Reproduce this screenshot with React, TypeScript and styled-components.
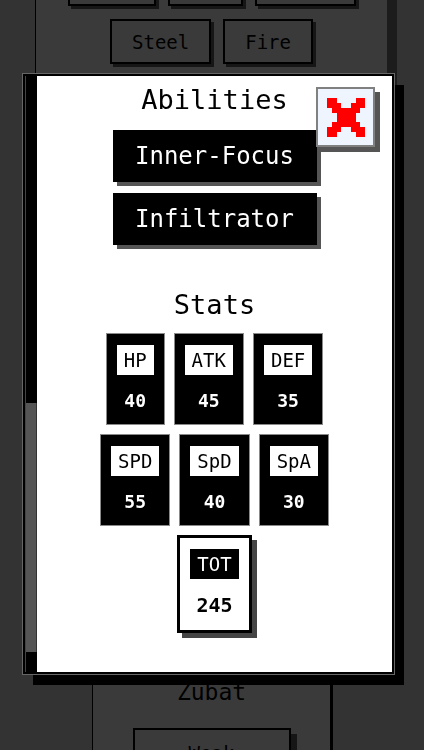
import styled, {createGlobalStyle} from 'styled-components';

const GlobalStyle = createGlobalStyle`
  html, body {
    margin: 0;
    padding: 0;
  }
  body {
    background: #cccccc;
    font-family: 'DejaVu Sans Mono', 'Liberation Mono', monospace;
    overflow: hidden;
  }
`;

type Stat = {label: string; value: number};

const stats: Stat[][] = [
  [
    {label: 'HP', value: 40},
    {label: 'ATK', value: 45},
    {label: 'DEF', value: 35},
  ],
  [
    {label: 'SPD', value: 55},
    {label: 'SpD', value: 40},
    {label: 'SpA', value: 30},
  ],
];

const abilities = ['Inner-Focus', 'Infiltrator'];

// buttons of the row scrolled above the viewport: only their bottom edges show
const hiddenTypeWidths = [88, 75, 101];

function CloseIcon() {
  const rows = ['XX....XX', 'XXX..XXX', '.XXXXXX.', '..XXXX..', '..XXXX..', '.XXXXXX.', 'XXX..XXX', 'XX....XX'];
  return (
    <svg width="38" height="39" viewBox="0 0 8 8" shapeRendering="crispEdges" preserveAspectRatio="none">
      {rows.flatMap((row, y) =>
        row.split('').map((c, x) => (c === 'X' ? <rect key={`${x}-${y}`} x={x} y={y} width="1" height="1" fill="#ff0000" /> : null)),
      )}
    </svg>
  );
}

export default function App() {
  const total = stats.flat().reduce((sum, s) => sum + s.value, 0);

  return (
    <>
      <GlobalStyle />
      <Page>
        <TypeCard>
          <TypeRow>
            {hiddenTypeWidths.map((w) => (
              <TypeButton key={w} style={{width: w}} aria-hidden />
            ))}
          </TypeRow>
          <TypeRow>
            <TypeButton>Steel</TypeButton>
            <TypeButton>Fire</TypeButton>
          </TypeRow>
        </TypeCard>
        <PokemonCard>
          <PokemonName>Zubat</PokemonName>
          <CardButton>Weak</CardButton>
        </PokemonCard>
      </Page>

      <Overlay />
      <Modal role="dialog">
        <ScrollTrack>
          <ScrollThumb />
        </ScrollTrack>
        <ModalBody>
          <Heading>Abilities</Heading>
          <AbilityList>
            {abilities.map((a) => (
              <AbilityButton key={a}>{a}</AbilityButton>
            ))}
          </AbilityList>

          <StatsHeading>Stats</StatsHeading>
          <StatGrid>
            {stats.map((row, i) => (
              <StatRow key={i}>
                {row.map((s) => (
                  <StatBox key={s.label}>
                    <StatLabel>{s.label}</StatLabel>
                    <StatValue>{s.value}</StatValue>
                  </StatBox>
                ))}
              </StatRow>
            ))}
            <StatRow>
              <StatBox $total>
                <StatLabel $total>TOT</StatLabel>
                <StatValue $total>{total}</StatValue>
              </StatBox>
            </StatRow>
          </StatGrid>
        </ModalBody>
        <CloseButton aria-label="Close">
          <CloseIcon />
        </CloseButton>
      </Modal>
    </>
  );
}

const Page = styled.div`
  display: flex;
  flex-direction: column;
  height: 750px;
  overflow: hidden;
`;

const TypeCard = styled.section`
  margin: -39px 0 0 35px;
  width: 352px;
  height: 520px;
  box-sizing: border-box;
  flex-shrink: 0;
  background: #e8e8e8;
  border-left: 1px solid #000;
  box-shadow: 10px 0 0 #707070;
  display: flex;
  flex-direction: column;
  align-items: center;
  gap: 13px;
`;

const TypeRow = styled.div`
  display: flex;
  justify-content: center;
  gap: 12px;
`;

const TypeButton = styled.button`
  all: unset;
  box-sizing: border-box;
  height: 45px;
  padding: 0 20px;
  display: flex;
  align-items: center;
  background: #e8e8e8;
  border: 2px solid #000;
  box-shadow: 3px 3px 0 #5a5a5a;
  font: 19px 'DejaVu Sans Mono', monospace;
  color: #000;
`;

const PokemonCard = styled.section`
  margin: 79px 0 0 92px;
  width: 241px;
  height: 300px;
  flex-shrink: 0;
  box-sizing: border-box;
  background: #e8e8e8;
  border-left: 1px solid #000;
  border-right: 3px solid #000;
  padding-top: 118px;
  display: flex;
  flex-direction: column;
  align-items: center;
`;

const PokemonName = styled.div`
  font: 23px/28px 'DejaVu Sans Mono', monospace;
  color: #000;
`;

const CardButton = styled.button`
  all: unset;
  box-sizing: border-box;
  margin-top: 22px;
  width: 158px;
  height: 50px;
  display: flex;
  align-items: center;
  justify-content: center;
  border: 2px solid #000;
  box-shadow: 6px 6px 0 #5a5a5a;
  font: 19px 'DejaVu Sans Mono', monospace;
  color: #000;
`;

const Overlay = styled.div`
  position: fixed;
  inset: 0;
  background: rgba(0, 0, 0, 0.75);
  z-index: 1;
`;

const Modal = styled.div`
  position: fixed;
  left: 23px;
  top: 74px;
  width: 371px;
  height: 600px;
  box-sizing: border-box;
  z-index: 2;
  display: flex;
  background: #fff;
  border: 2px solid #000;
  outline: 1px solid #666;
  box-shadow: 10px 11px 0 #000;
`;

const ScrollTrack = styled.div`
  width: 12px;
  flex-shrink: 0;
  box-sizing: border-box;
  background: #000;
  border-left: 1px solid #444;
  display: flex;
  flex-direction: column;
  justify-content: flex-end;
  padding-bottom: 20px;
`;

const ScrollThumb = styled.div`
  height: 249px;
  background: #555;
  border-right: 1px solid #333;
`;

const ModalBody = styled.div`
  flex: 1;
  display: flex;
  flex-direction: column;
  align-items: center;
  padding-top: 8px;
  font-family: 'DejaVu Sans Mono', monospace;
`;

const Heading = styled.h2`
  margin: 0;
  font: 27px/32px 'DejaVu Sans Mono', monospace;
  color: #000;
`;

const StatsHeading = styled(Heading)`
  margin-top: 44px;
`;

const AbilityList = styled.div`
  margin-top: 14px;
  display: flex;
  flex-direction: column;
  gap: 11px;
`;

const AbilityButton = styled.button`
  all: unset;
  box-sizing: border-box;
  width: 204px;
  height: 52px;
  display: flex;
  align-items: center;
  justify-content: center;
  background: #000;
  color: #fff;
  font: 24px 'DejaVu Sans Mono', monospace;
  box-shadow: 4px 4px 0 #555;
`;

const StatGrid = styled.div`
  margin-top: 12px;
  display: flex;
  flex-direction: column;
  align-items: center;
  gap: 9px;
`;

const StatRow = styled.div`
  display: flex;
  justify-content: center;
  gap: 9px;
`;

const StatBox = styled.div<{$total?: boolean}>`
  display: flex;
  flex-direction: column;
  align-items: center;
  padding: 11px 10px ${(p) => (p.$total ? '14px' : '12px')};
  background: ${(p) => (p.$total ? '#fff' : '#000')};
  border: ${(p) => (p.$total ? '3px solid #000' : '1px solid #8a8a8a')};
  box-shadow: ${(p) => (p.$total ? '5px 5px 0 #444' : 'none')};
`;

const StatLabel = styled.div<{$total?: boolean}>`
  height: 30px;
  padding: 0 7px;
  background: ${(p) => (p.$total ? '#000' : '#fff')};
  color: ${(p) => (p.$total ? '#fff' : '#000')};
  font: 19px/30px 'DejaVu Sans Mono', monospace;
`;

const StatValue = styled.div<{$total?: boolean}>`
  margin-top: 15px;
  color: ${(p) => (p.$total ? '#000' : '#fff')};
  font: bold ${(p) => (p.$total ? '20px' : '18px')} / 22px 'DejaVu Sans Mono', monospace;
`;

const CloseButton = styled.button`
  all: unset;
  position: absolute;
  top: 11px;
  right: 17px;
  box-sizing: border-box;
  width: 59px;
  height: 60px;
  display: flex;
  align-items: center;
  justify-content: center;
  background: #eef5fe;
  border: 2px solid #808080;
  box-shadow: 5px 5px 0 #555;
  cursor: pointer;
`;
